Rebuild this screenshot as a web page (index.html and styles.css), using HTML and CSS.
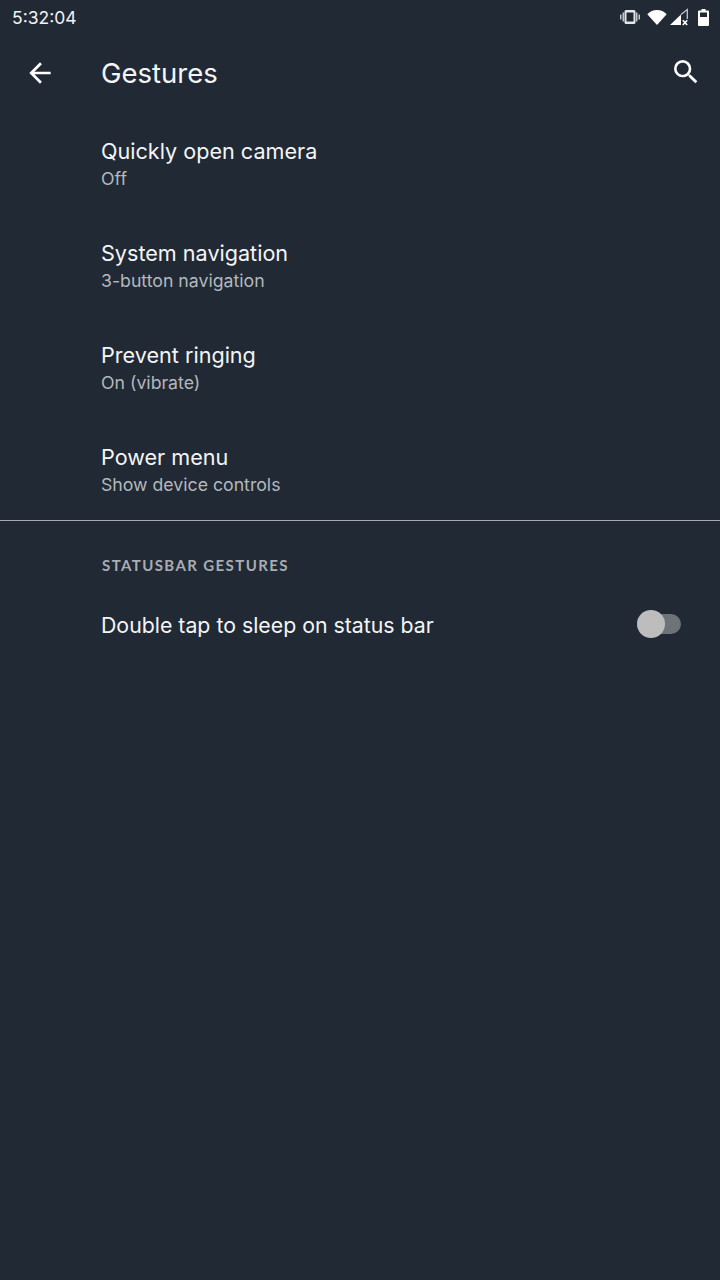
FILE: index.html
```html
<!DOCTYPE html>
<html lang="en">
<head>
    <meta charset="UTF-8">
    <meta name="viewport" content="width=device-width, initial-scale=1.0">
    <title>Gestures</title>
    <link rel="stylesheet" href="styles.css">
</head>
<body>
    <!-- Status bar -->
    <div class="status-bar">
        <span class="clock">5:32:04</span>
        <div class="status-icons">
            <svg class="ic-vibrate" width="20" height="14" viewBox="0 0 20 14"><path fill="#e4e6e8" fill-rule="evenodd" d="M6 0h8a1.500 1.500 0 0 1 1.500 1.500v11A1.500 1.500 0 0 1 14 14H6a1.500 1.500 0 0 1-1.500-1.500v-11A1.500 1.500 0 0 1 6 0zM6.500 2.500v9h7v-9z"/><path fill="#c4c7ca" d="M2.500 2.500H4v9H2.500zM16 2.500h1.500v9H16zM0 4.500h1.500v5H0zM18.500 4.500H20v5h-1.500z"/></svg>
            <svg class="ic-wifi" width="20" height="15" viewBox="0 0 20 15"><path fill="#fff" d="M10 15 .3 4.200C2.800 1.600 6.200 0 10 0s7.200 1.600 9.700 4.200z"/></svg>
            <svg class="ic-signal" width="18" height="18" viewBox="0 0 18 18"><path fill="#fff" d="M11 6.500V17H0z"/><path fill="none" stroke="#c4c7ca" stroke-width="1.300" d="M11 6.500 17.300 1.500V11"/><path stroke="#fff" stroke-width="1.600" d="M12.800 12.200l4.400 4.800M17.200 12.200l-4.400 4.800"/></svg>
            <svg class="ic-battery" width="11" height="17" viewBox="0 0 11 17"><path fill="#fff" fill-rule="evenodd" d="M3.500 0h4v1.500H10a1 1 0 0 1 1 1V16a1 1 0 0 1-1 1H1a1 1 0 0 1-1-1V2.500a1 1 0 0 1 1-1h2.500zM2 3.500V8h7V3.500z"/></svg>
        </div>
    </div>

    <!-- Toolbar -->
    <header class="toolbar">
        <svg class="back-icon" width="32" height="32" viewBox="0 0 24 24"><path fill="#fff" d="M20 11H7.830l5.590-5.590L12 4l-8 8 8 8 1.410-1.410L7.830 13H20z"/></svg>
        <h1 class="page-title">Gestures</h1>
        <svg class="search-icon" width="32" height="32" viewBox="0 0 24 24"><path fill="#fff" d="M15.500 14h-.79l-.28-.27A6.470 6.470 0 0 0 16 9.500 6.500 6.500 0 1 0 9.500 16c1.610 0 3.090-.59 4.230-1.570l.27.28v.79l5 4.990L20.490 19l-4.990-5zm-6 0C7.010 14 5 11.990 5 9.500S7.010 5 9.500 5 14 7.010 14 9.500 11.990 14 9.500 14z"/></svg>
    </header>

    <ul class="settings-list">
        <li class="settings-item">
            <div class="item-title">Quickly open camera</div>
            <div class="item-summary">Off</div>
        </li>
        <li class="settings-item">
            <div class="item-title">System navigation</div>
            <div class="item-summary">3-button navigation</div>
        </li>
        <li class="settings-item">
            <div class="item-title">Prevent ringing</div>
            <div class="item-summary">On (vibrate)</div>
        </li>
        <li class="settings-item">
            <div class="item-title">Power menu</div>
            <div class="item-summary">Show device controls</div>
        </li>
    </ul>

    <hr class="divider">

    <h2 class="section-header">STATUSBAR GESTURES</h2>
    <div class="switch-row">
        <div class="item-title">Double tap to sleep on status bar</div>
        <div class="switch">
            <div class="switch-track"></div>
            <div class="switch-thumb"></div>
        </div>
    </div>
</body>
</html>
```

FILE: styles.css
```css
body {
    font-family: "Inter", "Roboto", sans-serif;
    background-color: #202934;
    color: #fff;
    margin: 0;
    padding: 0;
    height: 1280px;
    overflow: hidden;
}

.status-bar {
    height: 34px;
    display: flex;
    align-items: center;
    justify-content: space-between;
    padding: 0 11px 0 12px;
}

.clock {
    font-size: 17.500px;
    color: #f2f3f4;
}

.status-icons {
    display: flex;
    align-items: center;
}

.ic-wifi {
    margin-left: 7px;
}

.ic-signal {
    margin-left: 3px;
}

.ic-battery {
    margin-left: 10px;
}

.toolbar {
    height: 78px;
    display: flex;
    align-items: center;
    padding: 0 18px 0 24px;
}

.back-icon {
    margin-right: 45px;
}

.search-icon {
    margin-bottom: 2px;
}

.page-title {
    flex: 1;
    margin: 0;
    font-size: 27.500px;
    font-weight: 400;
    color: #f4f5f6;
}

.settings-list {
    list-style: none;
    margin: 0;
    padding: 0;
}

.settings-item {
    box-sizing: border-box;
    height: 102px;
    padding: 4px 0 0 101px;
    display: flex;
    flex-direction: column;
    justify-content: center;
}

.item-title {
    font-size: 21.600px;
    line-height: 28px;
    color: #f4f5f6;
}

.item-summary {
    font-size: 17.700px;
    line-height: 28px;
    color: #b4b8bd;
}

.divider {
    border: 0;
    height: 1px;
    background-color: #a8acb2;
    margin: 0;
}

.section-header {
    margin: 35px 0 0;
    padding-left: 102px;
    font-family: "Lato", sans-serif;
    font-size: 15px;
    line-height: 18px;
    font-weight: 700;
    letter-spacing: 1.400px;
    color: #a9adb3;
}

.switch-row {
    display: flex;
    align-items: center;
    justify-content: space-between;
    padding: 0 37px 0 101px;
    margin-top: 29px;
    height: 44px;
}

.switch-row .item-title {
    font-size: 21.300px;
}

.switch {
    position: relative;
    width: 46px;
    height: 28px;
    margin-bottom: 2px;
}

.switch-track {
    position: absolute;
    left: 4px;
    top: 4px;
    width: 40px;
    height: 20px;
    border-radius: 10px;
    background-color: #6e737a;
}

.switch-thumb {
    position: absolute;
    left: 0;
    top: 0;
    width: 28px;
    height: 28px;
    border-radius: 50%;
    background-color: #bdbdbd;
}
```
